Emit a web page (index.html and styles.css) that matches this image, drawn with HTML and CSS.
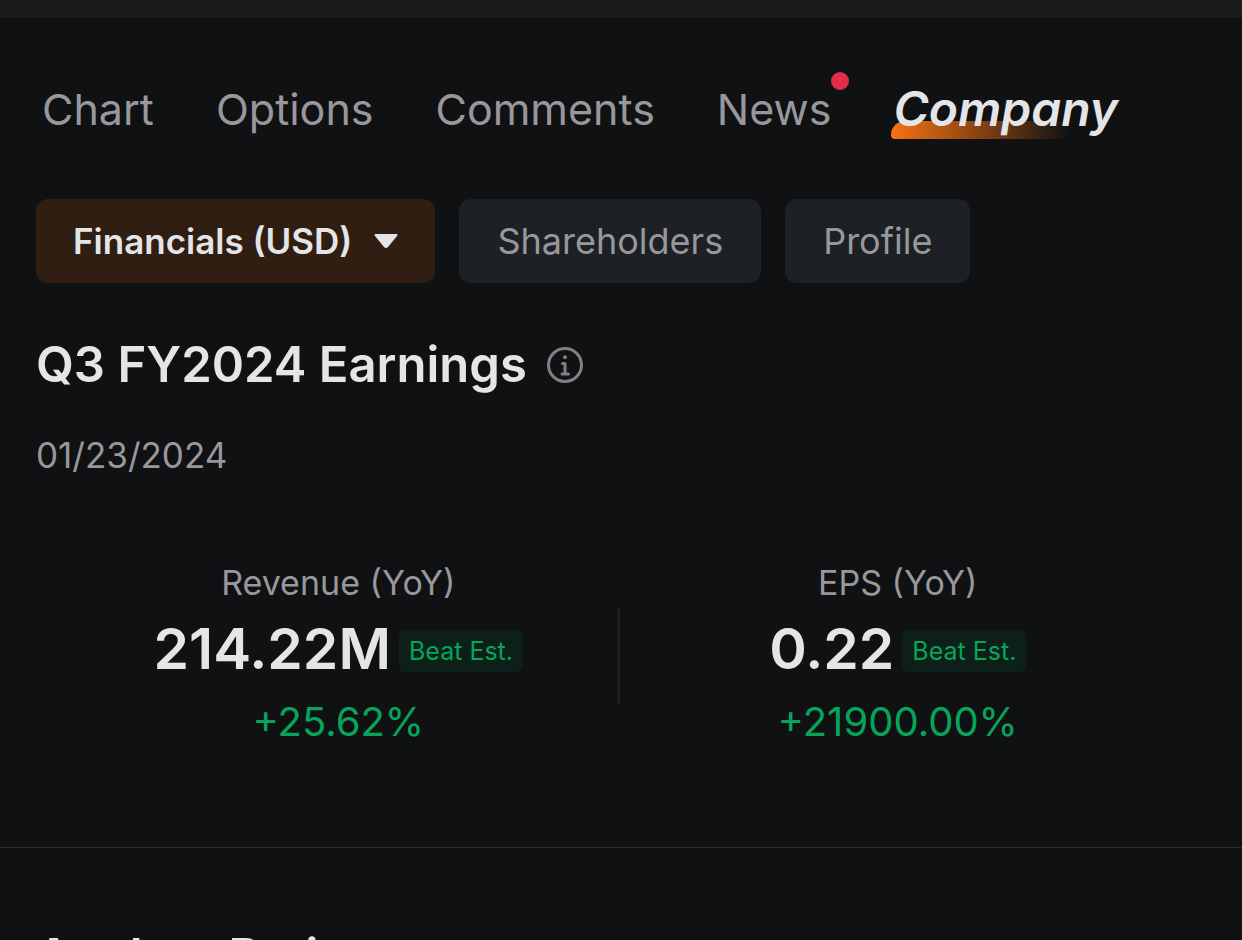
FILE: index.html
```html
<!DOCTYPE html>
<html lang="en">
<head>
<meta charset="utf-8">
<meta name="viewport" content="width=device-width, initial-scale=1">
<title>Company Financials</title>
<link rel="stylesheet" href="styles.css">
</head>
<body>
<header class="header">
  <nav class="tabs" aria-label="Stock sections">
    <a class="tab" href="#chart">Chart</a>
    <a class="tab" href="#options">Options</a>
    <a class="tab" href="#comments">Comments</a>
    <a class="tab tab-unread" href="#news">News</a>
    <a class="tab tab-active" href="#company" aria-current="page">Company</a>
  </nav>
</header>
<main>
  <div class="chips">
    <button class="chip chip-active" type="button" aria-haspopup="listbox">Financials (USD)
      <svg class="caret" viewBox="0 0 24 16" aria-hidden="true"><path d="M2 1H22Q24.500 1 23 3L14 14Q12 16 10 14L1 3Q-.5 1 2 1Z"/></svg>
    </button>
    <button class="chip" type="button">Shareholders</button>
    <button class="chip" type="button">Profile</button>
  </div>
  <section class="earnings">
    <div class="title-row">
      <h1 class="title">Q3 FY2024 Earnings</h1>
      <button class="info" type="button" aria-label="About earnings">
        <svg class="info-icon" viewBox="0 0 36 36" aria-hidden="true">
          <circle cx="18" cy="18" r="16.500"/>
          <path d="M15.500 16.500H18V26.500M15 27H21.500"/>
          <circle class="info-dot" cx="18" cy="10.200" r="2"/>
        </svg>
      </button>
    </div>
    <time class="date" datetime="2024-01-23">01/23/2024</time>
    <div class="stats">
      <div class="stat">
        <div class="label">Revenue (YoY)</div>
        <div class="value-row"><span class="value">214.22M</span><span class="badge">Beat Est.</span></div>
        <div class="change">+25.62%</div>
      </div>
      <div class="divider"></div>
      <div class="stat">
        <div class="label">EPS (YoY)</div>
        <div class="value-row"><span class="value">0.22</span><span class="badge">Beat Est.</span></div>
        <div class="change">+21900.00%</div>
      </div>
    </div>
  </section>
  <section class="rating">
    <h2 class="title">Analyst Rating</h2>
  </section>
</main>
</body>
</html>
```
FILE: styles.css
```css
* {
  box-sizing: border-box;
}

body {
  margin: 0;
  background: #101113;
  color: #e4e5e7;
  font-family: Inter, "Liberation Sans", sans-serif;
}

button {
  border: 0;
  font: inherit;
  cursor: pointer;
}

.header {
  border-top: 18px solid #1a1b1d;
  padding: 60px 36px 0 42px;
}

.tabs {
  display: flex;
  gap: 62px;
}

.tab {
  position: relative;
  color: #98989c;
  font-size: 43px;
  line-height: 62px;
  text-decoration: none;
  white-space: nowrap;
}

.tab-unread::after {
  content: "";
  position: absolute;
  top: -6px;
  right: -18px;
  width: 18px;
  height: 18px;
  border-radius: 50%;
  background: #e22e49;
}

.tab-active {
  isolation: isolate;
  color: #e4e5e7;
  font-size: 48px;
  font-weight: 600;
  font-style: italic;
}

.tab-active::before {
  content: "";
  position: absolute;
  z-index: -1;
  bottom: 1px;
  left: -2px;
  width: 180px;
  height: 18px;
  border-radius: 14px 0 0 4px;
  background: linear-gradient(90deg, #f87213, #101113);
}

.chips {
  display: flex;
  gap: 24px;
  padding: 59px 36px 0;
}

.chip {
  display: flex;
  align-items: center;
  gap: 20px;
  height: 84px;
  padding: 0 38px;
  border-radius: 12px;
  background: #1d2024;
  color: #98989c;
  font-size: 36px;
  white-space: nowrap;
}

.chip-active {
  gap: 22px;
  padding: 0 37px;
  background: #301e12;
  color: #e4e5e7;
  font-size: 35px;
  font-weight: 600;
}

.caret {
  width: 24px;
  height: 16px;
  fill: currentColor;
}

.earnings {
  padding: 50px 36px 96px;
  border-bottom: 1px solid #2a2b2d;
}

.title-row {
  display: flex;
  align-items: center;
  gap: 20px;
}

.title {
  margin: 0;
  font-size: 49px;
  font-weight: 600;
  line-height: 64px;
}

.info {
  display: flex;
  padding: 0;
  background: none;
  color: #7f8084;
}

.info-icon {
  width: 36px;
  height: 36px;
  fill: none;
  stroke: currentColor;
  stroke-width: 3;
  stroke-linecap: round;
  stroke-linejoin: round;
}

.info-dot {
  fill: currentColor;
  stroke: none;
}

.date {
  display: block;
  margin-top: 36px;
  color: #98989c;
  font-size: 35px;
  line-height: 44px;
}

.stats {
  display: grid;
  grid-template-columns: 1fr 3px 1fr;
  align-items: center;
  padding: 84px 30px 0 24px;
}

.stat {
  text-align: center;
}

.label {
  color: #98989c;
  font-size: 34px;
  line-height: 44px;
}

.value-row {
  display: flex;
  align-items: center;
  justify-content: center;
  gap: 8px;
  margin-top: 8px;
}

.value {
  font-size: 57px;
  font-weight: 600;
  line-height: 72px;
}

.badge {
  margin-top: 4px;
  padding: 0 10px;
  border-radius: 6px;
  background: #0d1f19;
  color: #06a55a;
  font-size: 25px;
  line-height: 42px;
}

.change {
  margin-top: 8px;
  color: #06a55a;
  font-size: 40px;
  line-height: 58px;
}

.divider {
  height: 96px;
  background: #1e1f21;
}

.rating {
  padding: 77px 36px 60px;
}
```
